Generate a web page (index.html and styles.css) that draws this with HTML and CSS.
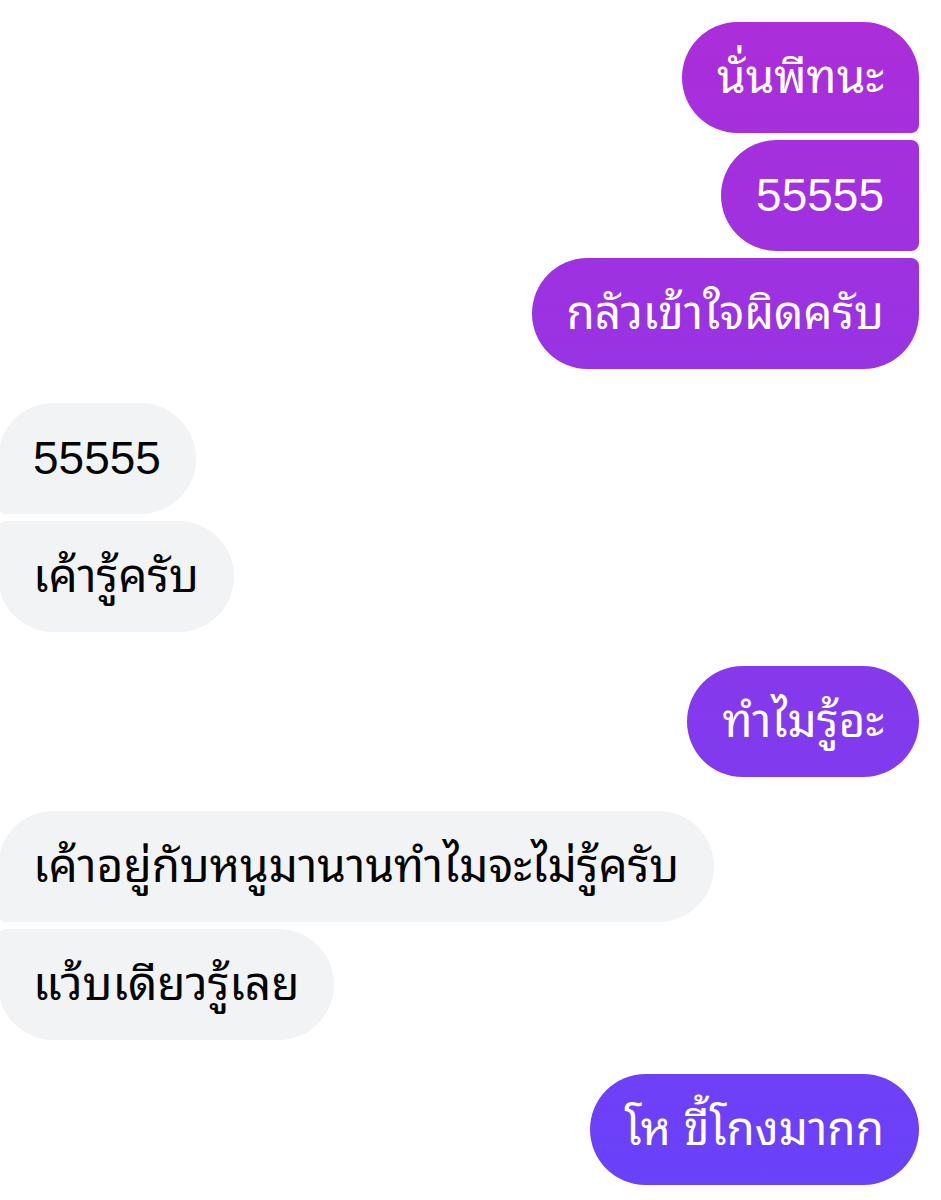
FILE: index.html
```html
<!DOCTYPE html>
<html lang="th">
<head>
    <meta charset="UTF-8">
    <meta name="viewport" content="width=device-width, initial-scale=1.0">
    <title>Chat</title>
    <link rel="stylesheet" href="styles.css">
</head>
<body>

<div class="chat">
    <div class="group sent">
        <div class="msg first">นั่นพีทนะ</div>
        <div class="msg mid">55555</div>
        <div class="msg last">กลัวเข้าใจผิดครับ</div>
    </div>

    <div class="group received">
        <div class="msg first">55555</div>
        <div class="msg last">เค้ารู้ครับ</div>
    </div>

    <div class="group sent">
        <div class="msg">ทำไมรู้อะ</div>
    </div>

    <div class="group received">
        <div class="msg first">เค้าอยู่กับหนูมานานทำไมจะไม่รู้ครับ</div>
        <div class="msg last">แว้บเดียวรู้เลย</div>
    </div>

    <div class="group sent">
        <div class="msg">โห ขี้โกงมากก</div>
    </div>
</div>

</body>
</html>
```

FILE: styles.css
```css
body {
    margin: 0;
    background-color: #fff;
    font-family: "Liberation Sans", "Noto Sans Thai Looped", "Waree", "Loma", "Garuda", "Noto Sans Thai", sans-serif;
    overflow: hidden;
}
.chat {
    display: flex;
    flex-direction: column;
    gap: 34px;
    padding: 22px 22px 0 0;
}
.group {
    display: flex;
    flex-direction: column;
    gap: 7px;
}
.sent {
    align-items: flex-end;
}
.received {
    align-items: flex-start;
    margin-left: -2px;
}
.msg {
    font-size: 46px;
    line-height: 59px;
    height: 59px;
    padding: 26px 35px;
    border-radius: 56px;
    white-space: nowrap;
}
.sent .msg {
    color: #fff;
    background: linear-gradient(to bottom, #ad2dd9 0%, #6842fa 100%) fixed;
}
.received .msg {
    color: #050505;
    background-color: #f2f3f5;
}
.sent .first {
    border-bottom-right-radius: 8px;
}
.sent .mid {
    border-top-right-radius: 8px;
    border-bottom-right-radius: 8px;
}
.sent .last {
    border-top-right-radius: 8px;
}
.received .first {
    border-bottom-left-radius: 8px;
}
.received .last {
    border-top-left-radius: 8px;
}
```
